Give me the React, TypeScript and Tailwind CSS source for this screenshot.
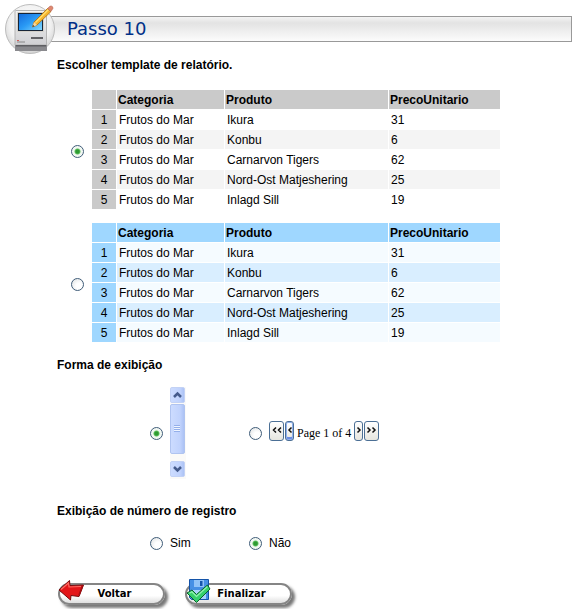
import React, { useState } from "react";

const rows: [string, string, string][] = [
  ["Frutos do Mar", "Ikura", "31"],
  ["Frutos do Mar", "Konbu", "6"],
  ["Frutos do Mar", "Carnarvon Tigers", "62"],
  ["Frutos do Mar", "Nord-Ost Matjeshering", "25"],
  ["Frutos do Mar", "Inlagd Sill", "19"],
];

const themes = {
  gray: { head: "bg-[#cacaca]", odd: "bg-white", even: "bg-[#f4f4f4]" },
  blue: { head: "bg-[#9fd7ff]", odd: "bg-[#f5fbff]", even: "bg-[#d9eeff]" },
};

function Radio(props: React.InputHTMLAttributes<HTMLInputElement>) {
  return (
    <input
      type="radio"
      {...props}
      className="m-0 size-[13px] shrink-0 appearance-none rounded-full border border-[#3f5c78] bg-[radial-gradient(circle_at_65%_65%,#ffffff_30%,#dcdfe0_100%)] checked:bg-[radial-gradient(circle,#2f9a32_0_20%,#58bd58_32%,#eef6ee_44%,#ffffff_100%)]"
    />
  );
}

function TemplateTable({ theme, label }: { theme: keyof typeof themes; label: string }) {
  const t = themes[theme];
  return (
    <table
      aria-label={label}
      className="w-full max-w-[410px] table-fixed border-separate border-spacing-px text-left text-xs leading-[17px]"
    >
      <colgroup>
        <col className="w-6" />
        <col className="w-[107px]" />
        <col className="w-[163px]" />
        <col />
      </colgroup>
      <thead>
        <tr className="h-[19px]">
          <td className={`p-0 ${t.head}`} />
          <th className={`px-px pt-0.5 pb-0 ${t.head}`}>Categoria</th>
          <th className={`px-px pt-0.5 pb-0 ${t.head}`}>Produto</th>
          <th className={`px-px pt-0.5 pb-0 ${t.head}`}>PrecoUnitario</th>
        </tr>
      </thead>
      <tbody>
        {rows.map((row, i) => (
          <tr key={row[1]} className="h-[19px]">
            <td className={`px-0 pt-0.5 pb-0 text-center ${t.head}`}>{i + 1}</td>
            {row.map((cell) => (
              <td key={cell} className={`px-0.5 pt-0.5 pb-0 ${i % 2 ? t.even : t.odd}`}>
                {cell}
              </td>
            ))}
          </tr>
        ))}
      </tbody>
    </table>
  );
}

function ComputerIcon() {
  return (
    <svg viewBox="0 0 52 52" className="absolute top-0.5 left-1 size-[52px]" aria-hidden="true">
      <defs>
        <radialGradient id="disc" cx=".5" cy=".4" r=".6">
          <stop offset="0" stopColor="#fff" />
          <stop offset=".7" stopColor="#f1f1f1" />
          <stop offset="1" stopColor="#d2d2d2" />
        </radialGradient>
        <linearGradient id="screen" x1="0" y1="0" x2="1" y2="1">
          <stop offset="0" stopColor="#1469dc" />
          <stop offset=".5" stopColor="#2a9bf5" />
          <stop offset="1" stopColor="#8adcff" />
        </linearGradient>
        <linearGradient id="body" x1="0" y1="0" x2="0" y2="1">
          <stop offset="0" stopColor="#f4f4f4" />
          <stop offset="1" stopColor="#d0d0d3" />
        </linearGradient>
      </defs>
      <circle cx="26" cy="27" r="24.5" fill="url(#disc)" stroke="#bdbdbd" />
      <path d="M12 8.500h29.500q1 0 1 1V43H11V9.500q0-1 1-1z" fill="url(#body)" stroke="#b4b4b4" />
      <path d="M11 43h32v6H11z" fill="#8a8a8e" />
      <path d="M12 43h30v1.500H12z" fill="#5f5f63" />
      <rect x="13" y="10" width="27" height="20" rx="1" fill="#d4d0c8" />
      <rect x="14.500" y="11.500" width="24" height="17" fill="url(#screen)" stroke="#172537" />
      <path d="M27 36h12" stroke="#3b3b3f" strokeWidth="1.500" />
      <path d="M13 40h8" stroke="#888" />
      <path d="M13 38.500h2" stroke="#d35b55" />
      <path d="M28.500 25l1.500-5L43.500 6.500l3.500 3L33 23z" fill="#f7b52c" stroke="#a96c13" strokeWidth=".8" />
      <path d="M31.500 20.500L44.500 7.500" stroke="#ffe175" strokeWidth="1.300" />
      <path d="M43.500 6.500l2.500-2.300q1.500-.5 2.500.5l.5 1.500-2 3.300z" fill="#df8870" stroke="#b35f4b" strokeWidth=".6" />
      <path d="M28.500 25l1.500-5 3 3z" fill="#f5d6a5" />
      <path d="M28.500 25l.6-2 1.400 1.300z" fill="#333" />
    </svg>
  );
}

function ScrollbarPicture() {
  return (
    <svg viewBox="0 0 16 92" className="h-[92px] w-4" role="img" aria-label="Barra de rolagem">
      <defs>
        <linearGradient id="thumb" x1="0" x2="1">
          <stop offset="0" stopColor="#cddcff" />
          <stop offset=".7" stopColor="#c0d2fc" />
          <stop offset="1" stopColor="#a9c0f4" />
        </linearGradient>
      </defs>
      <rect width="16" height="92" fill="#fbfaf8" />
      <rect x=".5" y=".5" width="14" height="15" rx="1.500" fill="url(#thumb)" stroke="#c3d2f5" />
      <path d="M4 10l3.500-3.500L11 10" fill="none" stroke="#455b8c" strokeWidth="2.500" />
      <rect x=".5" y="17.500" width="14" height="49" rx="1.500" fill="url(#thumb)" stroke="#b0c4f0" />
      <path d="M4 38.500h6M4 40.500h6M4 42.500h6M4 44.500h6" stroke="#94afea" />
      <path d="M4 39.500h6M4 41.500h6M4 43.500h6" stroke="#eef4ff" />
      <rect x=".5" y="74.500" width="14" height="15" rx="1.500" fill="url(#thumb)" stroke="#c3d2f5" />
      <path d="M4 80l3.500 3.500L11 80" fill="none" stroke="#455b8c" strokeWidth="2.500" />
    </svg>
  );
}

function PagerButton({ label, kind }: { label: string; kind: "first" | "prev" | "next" | "last" }) {
  const wide = kind === "first" || kind === "last";
  const paths = {
    first: "M6 5.500L3.500 8 6 10.500M11 5.500L8.500 8l2.500 2.500",
    prev: "M5.500 5.500L3 8l2.500 2.500",
    next: "M2.500 5.500L5 8l-2.500 2.500",
    last: "M2.500 5.500L5 8l-2.500 2.500M7.500 5.500L10 8l-2.500 2.500",
  };
  return (
    <button
      type="button"
      aria-label={label}
      className={`flex h-5 items-start justify-center rounded-[3px] border border-[#4b6f95] bg-linear-to-b from-white to-[#e6e6df] ${
        wide ? "w-[15px]" : "w-[9px]"
      } ${kind === "prev" ? "shadow-[inset_0_0_0_1px_#8fb0ee,inset_0_-3px_0_#6b8be0]" : ""}`}
    >
      <svg viewBox={wide ? "0 0 13 16" : "0 0 7 16"} className={wide ? "h-4 w-[13px] shrink-0" : "h-4 w-[7px] shrink-0"} aria-hidden="true">
        <path d={paths[kind]} fill="none" stroke="#111" strokeWidth="1.500" />
      </svg>
    </button>
  );
}

function ActionButton({ children, icon }: { children: string; icon: React.ReactNode }) {
  return (
    <button
      type="button"
      className="relative h-[22px] w-[107px] rounded-full border-2 border-[#858585] bg-linear-to-b from-white from-60% to-[#dedede] pl-1.5 text-center font-['DejaVu_Sans',Verdana,sans-serif] text-[10px] leading-4 font-bold shadow-[3px_3px_3px_#777]"
    >
      {icon}
      {children}
    </button>
  );
}

export default function App() {
  const [template, setTemplate] = useState("gray");
  const [display, setDisplay] = useState("scroll");
  const [numbered, setNumbered] = useState("nao");

  return (
    <main className="bg-white pb-1 font-['Liberation_Sans',Arial,sans-serif] text-xs text-black">
      <header className="relative pt-4 pr-2 pl-[50px]">
        <h1 className="h-[26px] border border-[#999] bg-linear-to-b from-[#f4f4f4] via-[#e3e3e3] via-25% to-[#fcfcfc] pl-4 font-['DejaVu_Sans',Verdana,sans-serif] text-lg leading-6 text-[#002f87]">
          Passo 10
        </h1>
        <ComputerIcon />
      </header>

      <form className="pl-[57px]" onSubmit={(e) => e.preventDefault()}>
        <section className="pt-[15px]">
          <h2 className="font-bold leading-4">Escolher template de relatório.</h2>
          <div className="mt-4 flex flex-col gap-3 pl-3.5">
            <div className="flex items-center gap-[7px]">
              <span className="flex pt-1">
                <Radio name="template" aria-label="Template cinza" checked={template === "gray"} onChange={() => setTemplate("gray")} />
              </span>
              <TemplateTable theme="gray" label="Template cinza" />
            </div>
            <div className="flex items-center gap-[7px]">
              <span className="flex pt-1">
                <Radio name="template" aria-label="Template azul" checked={template === "blue"} onChange={() => setTemplate("blue")} />
              </span>
              <TemplateTable theme="blue" label="Template azul" />
            </div>
          </div>
        </section>

        <section className="pt-3.5">
          <h2 className="font-bold leading-4">Forma de exibição</h2>
          <div className="mt-3.5 grid grid-cols-[99px_1fr] items-center pl-[93px]">
            <label className="flex items-center gap-[7px]">
              <Radio name="display" aria-label="Barra de rolagem" checked={display === "scroll"} onChange={() => setDisplay("scroll")} />
              <ScrollbarPicture />
            </label>
            <div className="flex items-center gap-[7px]">
              <Radio name="display" aria-label="Paginação" checked={display === "pages"} onChange={() => setDisplay("pages")} />
              <div className="flex items-center gap-px pb-1">
                <PagerButton kind="first" label="Primeira página" />
                <PagerButton kind="prev" label="Página anterior" />
                <span className="px-0.5 pt-1 font-['Liberation_Serif','Times_New_Roman',serif] text-xs leading-4 whitespace-nowrap">Page 1 of 4</span>
                <PagerButton kind="next" label="Próxima página" />
                <PagerButton kind="last" label="Última página" />
              </div>
            </div>
          </div>
        </section>

        <section className="pt-6">
          <h2 className="font-bold leading-4">Exibição de número de registro</h2>
          <div className="mt-4 grid grid-cols-[99px_1fr] pl-[93px] leading-4">
            <label className="flex items-center gap-[7px]">
              <Radio name="numbered" checked={numbered === "sim"} onChange={() => setNumbered("sim")} />
              Sim
            </label>
            <label className="flex items-center gap-[7px]">
              <Radio name="numbered" checked={numbered === "nao"} onChange={() => setNumbered("nao")} />
              Não
            </label>
          </div>
        </section>

        <div className="flex gap-5 pt-8 pl-px">
          <ActionButton
            icon={
              <svg viewBox="0 0 28 24" className="absolute -top-1.5 -left-0.5 h-6 w-7" aria-hidden="true">
                <path d="M1 11L11.500 1.500l.5 5 13.500-.5-4.500 11.500-8-1-.5 4.500z" fill="#e31619" stroke="#74090b" strokeLinejoin="round" />
                <path d="M3 10.500L10.500 4l.5 4 12-.5" fill="none" stroke="#ff6a62" strokeWidth="1.200" />
                <path d="M21 16l3.500-9" stroke="#a50e12" strokeWidth="1.500" />
              </svg>
            }
          >
            Voltar
          </ActionButton>
          <ActionButton
            icon={
              <svg viewBox="0 0 26 26" className="absolute -top-[7px] -left-px size-[26px]" aria-hidden="true">
                <path d="M3.500 1.500h19v20h-17l-2-2z" fill="#458fe5" stroke="#1453a8" />
                <path d="M8 2h10v7H8z" fill="#8fc2f8" />
                <path d="M14 3h2.500v5H14z" fill="#1656ad" />
                <path d="M6 12h14v9H6z" fill="#a9d2fb" />
                <path d="M1 15l5-3 4.500 4.500L21.500 7l2.500 4L10.500 24.500z" fill="#35d06c" stroke="#0a632a" strokeLinejoin="round" />
                <path d="M3.500 15.200l2.300-1.400 4.700 4.700L21.300 8.800" fill="none" stroke="#92f2af" strokeWidth="1.200" />
              </svg>
            }
          >
            Finalizar
          </ActionButton>
        </div>
      </form>
    </main>
  );
}
